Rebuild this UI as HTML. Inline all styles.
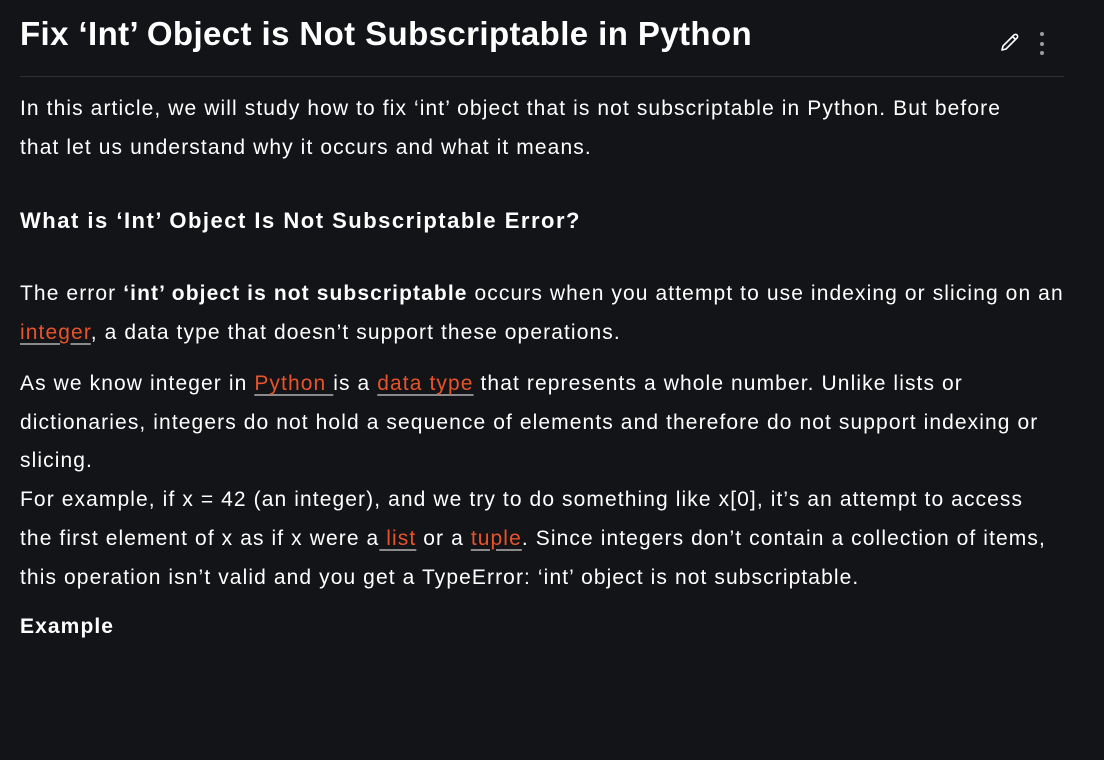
<!DOCTYPE html>
<html><head><meta charset="utf-8"><style>
html,body{margin:0;padding:0;background:#131417;width:1104px;height:760px;overflow:hidden}
body{font-family:"Liberation Sans",sans-serif;color:#fff}
.t{position:absolute;left:20px;top:15px;font-size:33px;font-weight:bold;white-space:nowrap;letter-spacing:0.4px}
.hr{position:absolute;left:20px;top:76px;width:1044px;height:1px;background:#2e3035}
p,h2{position:absolute;left:20px;margin:0;width:1084px;white-space:nowrap}
p{font-size:21px;line-height:38.7px;letter-spacing:1.1px}
h2{font-size:22px;font-weight:bold;letter-spacing:1.5px}
a{color:#e8532a;text-decoration:underline;text-decoration-color:#8a8a8a;text-underline-offset:4px}
</style></head><body>
<div class="t">Fix ‘Int’ Object is Not Subscriptable in Python</div>
<svg style="position:absolute;left:998px;top:30px" width="24" height="24" viewBox="0 0 24 24" fill="none" stroke="#fff" stroke-width="1.6" stroke-linejoin="round"><path d="M4 20l1-4L16 5a2 2 0 013 3L8 19z M14.5 6.5l3 3"/></svg>
<div style="position:absolute;left:1040px;top:32px;width:4px;height:4px;border-radius:2px;background:#9a9ca0"></div>
<div style="position:absolute;left:1040px;top:42px;width:4px;height:4px;border-radius:2px;background:#9a9ca0"></div>
<div style="position:absolute;left:1040px;top:51px;width:4px;height:4px;border-radius:2px;background:#9a9ca0"></div>
<div class="hr"></div>
<p style="top:90px">In this article, we will study how to fix ‘int’ object that is not subscriptable in Python. But before<br>that let us understand why it occurs and what it means.</p>
<h2 style="top:208px">What is ‘Int’ Object Is Not Subscriptable Error?</h2>
<p style="top:275px">The error <b>‘int’ object is not subscriptable</b> occurs when you attempt to use indexing or slicing on an<br><a>integer</a>, a data type that doesn’t support these operations.</p>
<p style="top:365px">As we know integer in <a>Python </a>is a <a>data type</a> that represents a whole number. Unlike lists or<br>dictionaries, integers do not hold a sequence of elements and therefore do not support indexing or<br>slicing.<br>For example, if x = 42 (an integer), and we try to do something like x[0], it’s an attempt to access<br>the first element of x as if x were a<a> list</a> or a <a>tuple</a>. Since integers don’t contain a collection of items,<br>this operation isn’t valid and you get a TypeError: ‘int’ object is not subscriptable.</p>
<p style="top:608px;font-weight:bold">Example</p>
</body></html>
